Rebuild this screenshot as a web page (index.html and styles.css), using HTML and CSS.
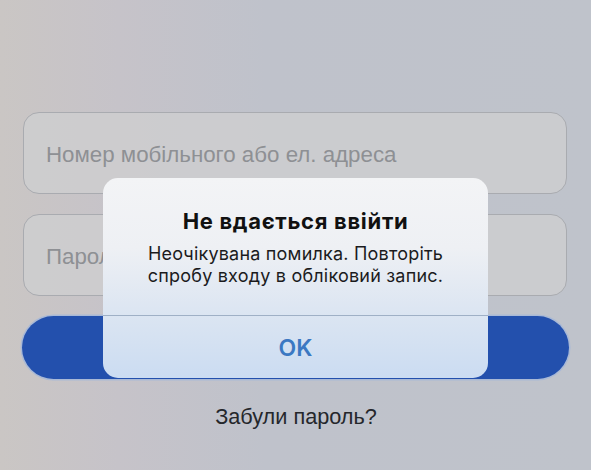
FILE: index.html
```html
<!DOCTYPE html>
<html lang="uk">
<head>
<meta charset="utf-8">
<link rel="stylesheet" href="styles.css">
</head>
<body>
<div class="screen">
  <div class="form">
    <div class="field"><span class="ph">Номер мобільного або ел. адреса</span></div>
    <div class="field"><span class="ph">Пароль</span></div>
    <div class="btn"></div>
    <div class="forgot">Забули пароль?</div>
  </div>
  <div class="alert">
    <div class="alert-body">
      <div class="alert-title">Не вдається ввійти</div>
      <div class="alert-msg">Неочікувана помилка. Повторіть спробу входу в обліковий запис.</div>
    </div>
    <div class="alert-action">OK</div>
  </div>
</div>
</body>
</html>
```
FILE: styles.css
```css
html, body {
  margin: 0;
  padding: 0;
}
body {
  width: 591px;
  height: 470px;
  overflow: hidden;
  background: linear-gradient(90deg, #cac6c4 0%, #c6c3c9 20%, #bfc2cb 45%, #bfc3cb 100%);
  font-family: "Liberation Sans", Arial, sans-serif;
}
.screen {
  position: relative;
  width: 591px;
  height: 470px;
}
.form {
  padding: 112px 24px 0 23px;
  display: flex;
  flex-direction: column;
}
.field {
  box-sizing: border-box;
  height: 82px;
  border: 1.5px solid #a9abb0;
  border-radius: 16px;
  background: rgba(206, 206, 208, 0.8);
  display: flex;
  align-items: center;
  padding: 4px 0 0 22px;
  margin-bottom: 20px;
}
.ph {
  font-size: 22.3px;
  color: #8e9094;
}
.btn {
  height: 63px;
  margin: 0 -2px 0 -1px;
  border-radius: 32px;
  background: #2350ad;
  box-shadow: 0 0 0 1.5px #a9b9d6;
}
.forgot {
  margin-top: 25px;
  text-align: center;
  font-size: 21.7px;
  color: #25272b;
  padding-left: 2px;
}
.alert {
  position: absolute;
  left: 103px;
  top: 178px;
  width: 385px;
  height: 200px;
  border-radius: 15px;
  overflow: hidden;
  background: linear-gradient(180deg, #f3f4f6 0%, #eef0f4 35%, #dde6f2 65%, #cbdcf2 100%);
  display: flex;
  flex-direction: column;
  font-family: Inter, "Open Sans", sans-serif;
}
.alert-body {
  height: 138px;
  flex: none;
  border-bottom: 1px solid #9fb0c6;
  box-sizing: border-box;
  text-align: center;
  padding-top: 28px;
}
.alert-title {
  font-size: 22px;
  font-weight: 700;
  color: #111;
  line-height: 30px;
  letter-spacing: 0.7px;
}
.alert-msg {
  margin: 7px auto 0;
  width: 340px;
  font-size: 18px;
  line-height: 22px;
  color: #1b1b1d;
  letter-spacing: 0.2px;
}
.alert-action {
  flex: 1;
  display: flex;
  align-items: center;
  justify-content: center;
  font-size: 23px;
  font-weight: 600;
  color: #3b78c2;
  padding-top: 2px;
}
```
